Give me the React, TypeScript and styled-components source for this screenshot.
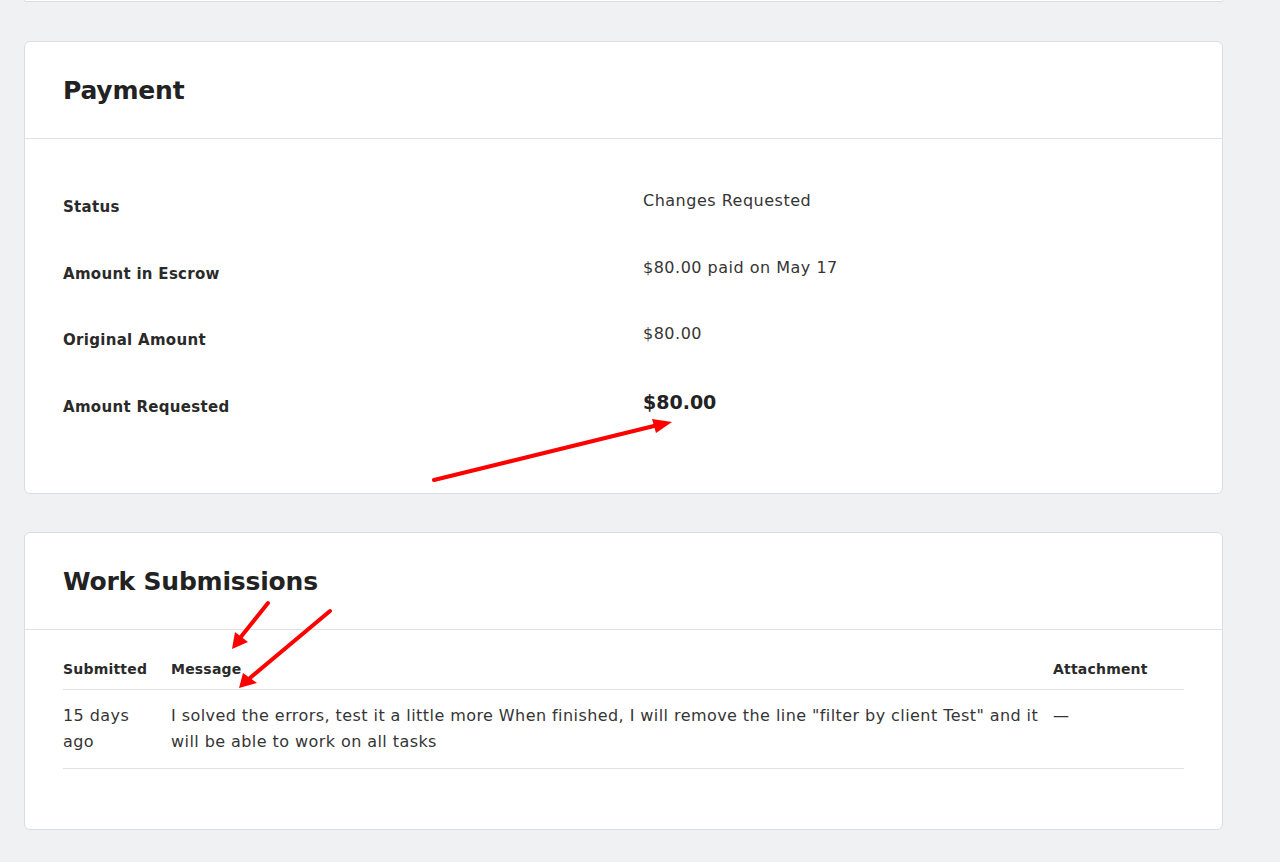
import React from "react";
import styled, { createGlobalStyle } from "styled-components";

const Global = createGlobalStyle`
  html, body { margin: 0; padding: 0; background: #f0f1f3; }
  body { font-family: "DejaVu Sans", "Liberation Sans", sans-serif; color: #262626; }
  * { box-sizing: border-box; }
`;

const Page = styled.div`
  position: relative;
  width: 1280px;
  height: 862px;
  overflow: hidden;
  padding: 0 57px 0 24px;
  display: flex;
  flex-direction: column;
  gap: 38px;
`;

const Card = styled.section`
  background: #ffffff;
  border: 1px solid #dcdde0;
  border-radius: 6px;
  flex-shrink: 0;
`;

const StubCard = styled(Card)`
  height: 2px;
  border-top: none;
  border-radius: 0 0 6px 6px;
  margin-bottom: 1px;
`;

const CardHeader = styled.header`
  height: 97px;
  display: flex;
  align-items: center;
  padding: 0 38px;
  border-bottom: 1px solid #e0e1e3;
`;

const Title = styled.h2`
  margin: 0;
  font-size: 25px;
  font-weight: 700;
  color: #222222;
  letter-spacing: -0.2px;
`;

const PaymentBody = styled.dl`
  margin: 0;
  padding: 52px 38px 36px;
  display: grid;
  grid-template-columns: 580px 1fr;
  grid-auto-rows: 66.5px;
  align-items: start;
`;

const Label = styled.dt`
  margin: 0;
  padding-top: 6px;
  font-size: 15px;
  line-height: 20px;
  font-weight: 700;
  letter-spacing: 0.3px;
  color: #2a2a2a;
`;

const Value = styled.dd<{ $strong?: boolean }>`
  margin: 0;
  font-size: ${(p) => (p.$strong ? "19px" : "16px")};
  line-height: ${(p) => (p.$strong ? "24px" : "20px")};
  font-weight: ${(p) => (p.$strong ? 700 : 400)};
  letter-spacing: ${(p) => (p.$strong ? "0" : "0.5px")};
  margin-top: ${(p) => (p.$strong ? "-1px" : "0")};
  color: ${(p) => (p.$strong ? "#222222" : "#353535")};
`;

const TableBody = styled.div`
  padding: 20px 38px 60px;
`;

const Table = styled.table`
  width: 100%;
  border-collapse: collapse;
  table-layout: fixed;
`;

const Th = styled.th<{ $w?: number }>`
  text-align: left;
  font-size: 14px;
  line-height: 20px;
  font-weight: 700;
  letter-spacing: 0.2px;
  color: #2a2a2a;
  padding: 9px 16px 10px 0;
  border-bottom: 1px solid #e0e1e3;
  width: ${(p) => (p.$w ? `${p.$w}px` : "auto")};
  &:last-child { padding-right: 0; }
`;

const Td = styled.td<{ $pr?: number }>`
  vertical-align: top;
  font-size: 16px;
  line-height: 26px;
  letter-spacing: 0.43px;
  color: #353535;
  padding: 13px ${(p) => (p.$pr ?? 16)}px 13px 0;
  border-bottom: 1px solid #e0e1e3;
  &:last-child { padding-right: 0; }
`;

const Overlay = styled.svg`
  position: absolute;
  left: 0;
  top: 0;
  width: 1280px;
  height: 862px;
  pointer-events: none;
`;

const rows: { label: string; value: string; strong?: boolean }[] = [
  { label: "Status", value: "Changes Requested" },
  { label: "Amount in Escrow", value: "$80.00 paid on May 17" },
  { label: "Original Amount", value: "$80.00" },
  { label: "Amount Requested", value: "$80.00", strong: true },
];

export default function App() {
  return (
    <>
      <Global />
      <Page>
        <StubCard />
        <Card>
          <CardHeader>
            <Title>Payment</Title>
          </CardHeader>
          <PaymentBody>
            {rows.map((r) => (
              <React.Fragment key={r.label}>
                <Label>{r.label}</Label>
                <Value $strong={r.strong}>{r.value}</Value>
              </React.Fragment>
            ))}
          </PaymentBody>
        </Card>
        <Card>
          <CardHeader>
            <Title>Work Submissions</Title>
          </CardHeader>
          <TableBody>
            <Table>
              <thead>
                <tr>
                  <Th $w={108}>Submitted</Th>
                  <Th>Message</Th>
                  <Th $w={131}>Attachment</Th>
                </tr>
              </thead>
              <tbody>
                <tr>
                  <Td>15 days ago</Td>
                  <Td $pr={10}>
                    I solved the errors, test it a little more When finished, I will remove the line "filter by client Test" and it will be able to work on all tasks
                  </Td>
                  <Td>—</Td>
                </tr>
              </tbody>
            </Table>
          </TableBody>
        </Card>
        <Overlay viewBox="0 0 1280 862">
          <g stroke="#ff0000" strokeWidth="4" strokeLinecap="round" fill="none">
            <line x1="434" y1="480" x2="658" y2="425" />
            <line x1="268" y1="603" x2="240" y2="638" />
            <line x1="330" y1="611" x2="250" y2="678" />
          </g>
          <g fill="#ff0000">
            <polygon points="672,422 652,419 656,433" />
            <polygon points="232,649 235,632 248,642" />
            <polygon points="239,688 243,673 257,683" />
          </g>
        </Overlay>
      </Page>
    </>
  );
}
